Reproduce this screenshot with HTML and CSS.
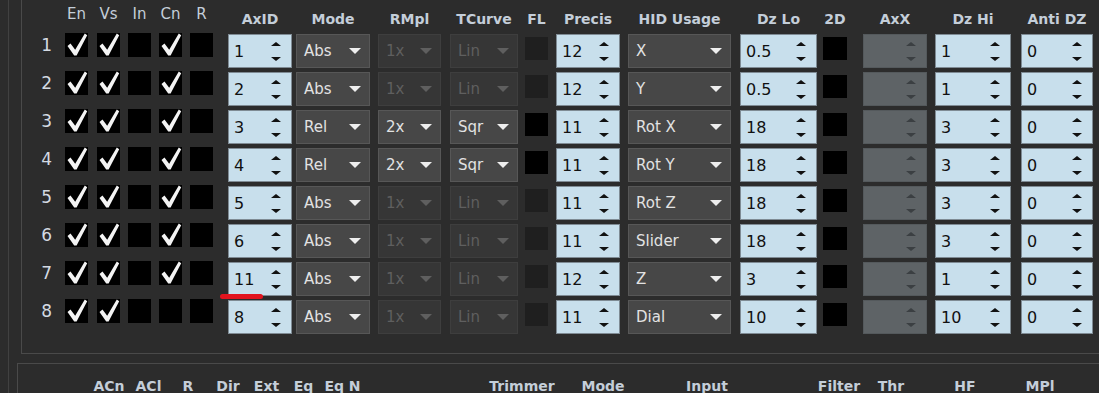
FILE: index.html
```html
<!DOCTYPE html>
<html lang="en">
<head>
  <meta charset="UTF-8" />
  <title>Axis Settings</title>
  <link rel="stylesheet" href="styles.css">
</head>
<body>
  <svg class="defs" width="0" height="0">
    <symbol id="tick" viewBox="0 0 23 24">
      <polygon points="2.5,13 5.5,10.5 10.2,16.8 19.8,0.6 22.2,2.2 11.6,22.4 9.2,22.4" />
    </symbol>
  </svg>

  <div class="panel">
    <!-- Axis table -->
    <div class="group axes">
      <div class="line head">
        <span></span>
        <span class="ch">En</span>
        <span class="ch">Vs</span>
        <span class="ch">In</span>
        <span class="ch">Cn</span>
        <span class="ch">R</span>
        <span class="hd axid">AxID</span>
        <span class="hd mode">Mode</span>
        <span class="hd rmpl">RMpl</span>
        <span class="hd tcurve">TCurve</span>
        <span class="hd fl">FL</span>
        <span class="hd precis">Precis</span>
        <span class="hd hid">HID Usage</span>
        <span class="hd dzlo">Dz Lo</span>
        <span class="hd d2">2D</span>
        <span class="hd axx">AxX</span>
        <span class="hd dzhi">Dz Hi</span>
        <span class="hd anti">Anti DZ</span>
      </div>

      <div class="rows">
        <div class="line">
          <span class="num">1</span>
          <span class="chk"><svg><use href="#tick"/></svg></span>
          <span class="chk"><svg><use href="#tick"/></svg></span>
          <span class="chk"></span>
          <span class="chk"><svg><use href="#tick"/></svg></span>
          <span class="chk"></span>
          <div class="spin axid"><span>1</span><b class="arrows"></b></div>
          <div class="combo mode">Abs</div>
          <div class="combo rmpl off">1x</div>
          <div class="combo tcurve off">Lin</div>
          <span class="box fl off"></span>
          <div class="spin precis"><span>12</span><b class="arrows"></b></div>
          <div class="combo hid">X</div>
          <div class="spin dzlo"><span>0.5</span><b class="arrows"></b></div>
          <span class="box d2"></span>
          <div class="spin axx off"><span></span><b class="arrows"></b></div>
          <div class="spin dzhi"><span>1</span><b class="arrows"></b></div>
          <div class="spin anti"><span>0</span><b class="arrows"></b></div>
        </div>

        <div class="line">
          <span class="num">2</span>
          <span class="chk"><svg><use href="#tick"/></svg></span>
          <span class="chk"><svg><use href="#tick"/></svg></span>
          <span class="chk"></span>
          <span class="chk"><svg><use href="#tick"/></svg></span>
          <span class="chk"></span>
          <div class="spin axid"><span>2</span><b class="arrows"></b></div>
          <div class="combo mode">Abs</div>
          <div class="combo rmpl off">1x</div>
          <div class="combo tcurve off">Lin</div>
          <span class="box fl off"></span>
          <div class="spin precis"><span>12</span><b class="arrows"></b></div>
          <div class="combo hid">Y</div>
          <div class="spin dzlo"><span>0.5</span><b class="arrows"></b></div>
          <span class="box d2"></span>
          <div class="spin axx off"><span></span><b class="arrows"></b></div>
          <div class="spin dzhi"><span>1</span><b class="arrows"></b></div>
          <div class="spin anti"><span>0</span><b class="arrows"></b></div>
        </div>

        <div class="line">
          <span class="num">3</span>
          <span class="chk"><svg><use href="#tick"/></svg></span>
          <span class="chk"><svg><use href="#tick"/></svg></span>
          <span class="chk"></span>
          <span class="chk"><svg><use href="#tick"/></svg></span>
          <span class="chk"></span>
          <div class="spin axid"><span>3</span><b class="arrows"></b></div>
          <div class="combo mode">Rel</div>
          <div class="combo rmpl">2x</div>
          <div class="combo tcurve">Sqr</div>
          <span class="box fl"></span>
          <div class="spin precis"><span>11</span><b class="arrows"></b></div>
          <div class="combo hid">Rot X</div>
          <div class="spin dzlo"><span>18</span><b class="arrows"></b></div>
          <span class="box d2"></span>
          <div class="spin axx off"><span></span><b class="arrows"></b></div>
          <div class="spin dzhi"><span>3</span><b class="arrows"></b></div>
          <div class="spin anti"><span>0</span><b class="arrows"></b></div>
        </div>

        <div class="line">
          <span class="num">4</span>
          <span class="chk"><svg><use href="#tick"/></svg></span>
          <span class="chk"><svg><use href="#tick"/></svg></span>
          <span class="chk"></span>
          <span class="chk"><svg><use href="#tick"/></svg></span>
          <span class="chk"></span>
          <div class="spin axid"><span>4</span><b class="arrows"></b></div>
          <div class="combo mode">Rel</div>
          <div class="combo rmpl">2x</div>
          <div class="combo tcurve">Sqr</div>
          <span class="box fl"></span>
          <div class="spin precis"><span>11</span><b class="arrows"></b></div>
          <div class="combo hid">Rot Y</div>
          <div class="spin dzlo"><span>18</span><b class="arrows"></b></div>
          <span class="box d2"></span>
          <div class="spin axx off"><span></span><b class="arrows"></b></div>
          <div class="spin dzhi"><span>3</span><b class="arrows"></b></div>
          <div class="spin anti"><span>0</span><b class="arrows"></b></div>
        </div>

        <div class="line">
          <span class="num">5</span>
          <span class="chk"><svg><use href="#tick"/></svg></span>
          <span class="chk"><svg><use href="#tick"/></svg></span>
          <span class="chk"></span>
          <span class="chk"><svg><use href="#tick"/></svg></span>
          <span class="chk"></span>
          <div class="spin axid"><span>5</span><b class="arrows"></b></div>
          <div class="combo mode">Abs</div>
          <div class="combo rmpl off">1x</div>
          <div class="combo tcurve off">Lin</div>
          <span class="box fl off"></span>
          <div class="spin precis"><span>11</span><b class="arrows"></b></div>
          <div class="combo hid">Rot Z</div>
          <div class="spin dzlo"><span>18</span><b class="arrows"></b></div>
          <span class="box d2"></span>
          <div class="spin axx off"><span></span><b class="arrows"></b></div>
          <div class="spin dzhi"><span>3</span><b class="arrows"></b></div>
          <div class="spin anti"><span>0</span><b class="arrows"></b></div>
        </div>

        <div class="line">
          <span class="num">6</span>
          <span class="chk"><svg><use href="#tick"/></svg></span>
          <span class="chk"><svg><use href="#tick"/></svg></span>
          <span class="chk"></span>
          <span class="chk"><svg><use href="#tick"/></svg></span>
          <span class="chk"></span>
          <div class="spin axid"><span>6</span><b class="arrows"></b></div>
          <div class="combo mode">Abs</div>
          <div class="combo rmpl off">1x</div>
          <div class="combo tcurve off">Lin</div>
          <span class="box fl off"></span>
          <div class="spin precis"><span>11</span><b class="arrows"></b></div>
          <div class="combo hid">Slider</div>
          <div class="spin dzlo"><span>18</span><b class="arrows"></b></div>
          <span class="box d2"></span>
          <div class="spin axx off"><span></span><b class="arrows"></b></div>
          <div class="spin dzhi"><span>3</span><b class="arrows"></b></div>
          <div class="spin anti"><span>0</span><b class="arrows"></b></div>
        </div>

        <div class="line">
          <span class="num">7</span>
          <span class="chk"><svg><use href="#tick"/></svg></span>
          <span class="chk"><svg><use href="#tick"/></svg></span>
          <span class="chk"></span>
          <span class="chk"><svg><use href="#tick"/></svg></span>
          <span class="chk"></span>
          <div class="spin axid"><span>11</span><b class="arrows"></b></div>
          <div class="combo mode">Abs</div>
          <div class="combo rmpl off">1x</div>
          <div class="combo tcurve off">Lin</div>
          <span class="box fl off"></span>
          <div class="spin precis"><span>12</span><b class="arrows"></b></div>
          <div class="combo hid">Z</div>
          <div class="spin dzlo"><span>3</span><b class="arrows"></b></div>
          <span class="box d2"></span>
          <div class="spin axx off"><span></span><b class="arrows"></b></div>
          <div class="spin dzhi"><span>1</span><b class="arrows"></b></div>
          <div class="spin anti"><span>0</span><b class="arrows"></b></div>
        </div>

        <div class="line">
          <span class="num">8</span>
          <span class="chk"><svg><use href="#tick"/></svg></span>
          <span class="chk"><svg><use href="#tick"/></svg></span>
          <span class="chk"></span>
          <span class="chk"></span>
          <span class="chk"></span>
          <div class="spin axid"><span>8</span><b class="arrows"></b></div>
          <div class="combo mode">Abs</div>
          <div class="combo rmpl off">1x</div>
          <div class="combo tcurve off">Lin</div>
          <span class="box fl off"></span>
          <div class="spin precis"><span>11</span><b class="arrows"></b></div>
          <div class="combo hid">Dial</div>
          <div class="spin dzlo"><span>10</span><b class="arrows"></b></div>
          <span class="box d2"></span>
          <div class="spin axx off"><span></span><b class="arrows"></b></div>
          <div class="spin dzhi"><span>10</span><b class="arrows"></b></div>
          <div class="spin anti"><span>0</span><b class="arrows"></b></div>
        </div>
      </div>
    </div>

    <!-- Buttons table (cut off at the bottom) -->
    <div class="group buttons">
      <div class="labels">
        <span class="lb" style="width: 40px">ACn</span>
        <span class="lb" style="width: 39px">ACl</span>
        <span class="lb" style="width: 40px">R</span>
        <span class="lb" style="width: 40px">Dir</span>
        <span class="lb" style="width: 37px">Ext</span>
        <span class="lb" style="width: 37px">Eq</span>
        <span class="lb" style="width: 41px">Eq N</span>
        <span class="lb push-trim" style="width: 80px">Trimmer</span>
        <span class="lb" style="width: 82px">Mode</span>
        <span class="lb" style="width: 126px">Input</span>
        <span class="lb push-filter" style="width: 54px">Filter</span>
        <span class="lb" style="width: 50px">Thr</span>
        <span class="lb" style="width: 98px">HF</span>
        <span class="lb" style="width: 52px">MPl</span>
      </div>
    </div>
  </div>

  <div class="marker"></div>
</body>
</html>
```

FILE: styles.css
```css
:root {
  --bg: #2c2c2c;
  --line: #4a4a4a;
  --head: #c4ced9;
  --num: #d4dae2;
  --spin-bg: #c8dfec;
  --spin-border: #7f8b94;
  --combo-bg: #474747;
  --combo-border: #575757;
  --off-bg: #363636;
  --off-border: #3e3e3e;
  --off-text: #5f5f5f;
  --cols: 43px 32px 31px 31px 31px 38px 68px 82px 72px 75px 31px 72px 112px 83px 40px 72px 86px 78px;
}

body {
  margin: 0;
  height: 393px;
  overflow: hidden;
  background-color: var(--bg);
  font-family: 'DejaVu Sans', sans-serif;
}

.defs {
  position: absolute;
}

.panel {
  margin-left: 8px;
  padding-left: 8px;
  height: 393px;
  border-left: 1px solid #414141;
}

.group.axes {
  margin-left: 4px;
  padding-bottom: 19px;
  border-left: 1px solid var(--line);
  border-bottom: 1px solid var(--line);
}

.group.buttons {
  margin-top: 9px;
  padding: 14px 0 0 71px;
  border-left: 1px solid var(--line);
  border-top: 1px solid var(--line);
}

.line {
  display: grid;
  grid-template-columns: var(--cols);
  align-items: start;
  justify-items: start;
}

.rows {
  display: flex;
  flex-direction: column;
  gap: 3px;
}

/* header */
.line.head {
  height: 33px;
}

.ch,
.hd {
  display: flex;
  justify-content: center;
  white-space: nowrap;
  color: var(--head);
}

.ch {
  width: 23px;
  padding-top: 5px;
  font-size: 15px;
  line-height: 18px;
}

.hd {
  padding-top: 11px;
  font-size: 14px;
  line-height: 17px;
  font-weight: bold;
}

/* column widths */
.chk { width: 23px; }
.axid { width: 64px; }
.mode { width: 74px; }
.rmpl { width: 63px; }
.tcurve { width: 68px; }
.fl { width: 23px; }
.precis { width: 64px; }
.hid { width: 103px; }
.dzlo { width: 77px; }
.d2 { width: 24px; }
.axx { width: 64px; }
.dzhi { width: 76px; }
.anti { width: 72px; }

/* row cells */
.num {
  justify-self: stretch;
  text-align: right;
  padding-right: 13px;
  font-size: 17px;
  line-height: 24px;
  color: var(--num);
}

.chk {
  height: 24px;
  background-color: #000;
}

.chk svg {
  display: block;
  width: 23px;
  height: 24px;
  fill: #f4f4f4;
}

.box {
  height: 23px;
  margin-top: 4px;
  background-color: #000;
}

.box.off {
  background-color: #1f1f1f;
}

.spin,
.combo {
  box-sizing: border-box;
  height: 34px;
  margin-top: 1px;
  display: flex;
  align-items: center;
  white-space: nowrap;
}

.spin {
  padding-left: 5px;
  background-color: var(--spin-bg);
  border: 1px solid var(--spin-border);
  color: #111;
  font-size: 16px;
}

.spin.off {
  background-color: #5e6366;
  border-color: #54595c;
}

.arrows {
  margin-left: auto;
  margin-right: 10px;
  display: flex;
  flex-direction: column;
  gap: 11px;
}

.arrows::before,
.arrows::after {
  content: '';
  border-left: 5px solid transparent;
  border-right: 5px solid transparent;
}

.arrows::before {
  border-bottom: 4px solid #111;
}

.arrows::after {
  border-top: 4px solid #111;
}

.spin.off .arrows::before {
  border-bottom-color: #3b3f42;
}

.spin.off .arrows::after {
  border-top-color: #3b3f42;
}

.combo {
  padding: 0 8px 0 7px;
  background-color: var(--combo-bg);
  border: 1px solid var(--combo-border);
  color: #e2e2e2;
  font-size: 15px;
}

.combo::after {
  content: '';
  margin-left: auto;
  border-left: 6px solid transparent;
  border-right: 6px solid transparent;
  border-top: 6px solid #eeeeee;
}

.combo.off {
  background-color: var(--off-bg);
  border-color: var(--off-border);
  color: var(--off-text);
}

.combo.off::after {
  border-top-color: var(--off-text);
}

/* bottom group labels */
.labels {
  display: flex;
}

.lb {
  display: flex;
  justify-content: center;
  white-space: nowrap;
  font-size: 14px;
  line-height: 17px;
  font-weight: bold;
  color: var(--head);
}

.push-trim {
  margin-left: 119px;
}

.push-filter {
  margin-left: 42px;
}

/* red annotation stroke */
.marker {
  position: absolute;
  left: 220px;
  top: 294px;
  width: 43px;
  height: 5px;
  border-radius: 3px;
  background-color: #e2141e;
}
```
